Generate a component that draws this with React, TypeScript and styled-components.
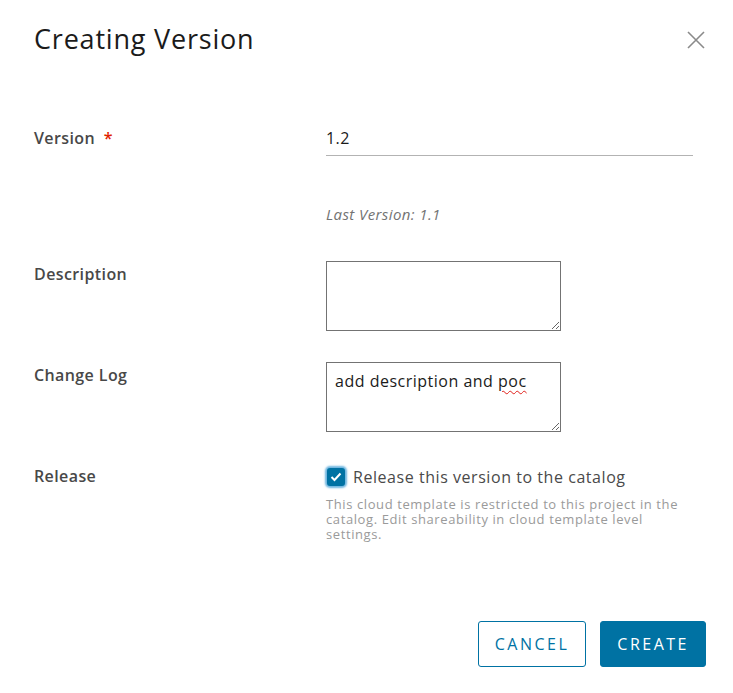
import styled, { createGlobalStyle } from 'styled-components'

const GlobalStyle = createGlobalStyle`
  body {
    margin: 0;
    background: #fff;
    font-family: "Open Sans", "Liberation Sans", sans-serif;
  }
`

export default function App() {
  return (
    <>
      <GlobalStyle />
      <Dialog>
        <Header>
          <Title>Creating Version</Title>
          <Close aria-label="Close">
            <svg width="20" height="20" viewBox="0 0 20 20">
              <path d="M2 2 L18 18 M18 2 L2 18" stroke="#8a8a8a" strokeWidth="1.6" fill="none" />
            </svg>
          </Close>
        </Header>
        <Form>
          <Label $offset={3}>Version <Required>*</Required></Label>
          <Field>
            <LineInput defaultValue="1.2" />
            <Hint>Last Version: 1.1</Hint>
          </Field>

          <Label>Description</Label>
          <Field>
            <TextArea />
          </Field>

          <Label>Change Log</Label>
          <Field>
            <TextBox role="textbox">
              add description and <Misspelled>poc</Misspelled>
            </TextBox>
          </Field>

          <Label>Release</Label>
          <Field>
            <CheckRow>
              <Check>
                <svg width="12" height="10" viewBox="0 0 12 10">
                  <path d="M1.5 5 L4.5 8 L10.5 1.5" stroke="#fff" strokeWidth="2" fill="none" />
                </svg>
              </Check>
              <CheckLabel>Release this version to the catalog</CheckLabel>
            </CheckRow>
            <Helper>
              This cloud template is restricted to this project in the catalog. Edit shareability in cloud template level settings.
            </Helper>
          </Field>
        </Form>
        <Footer>
          <Button>CANCEL</Button>
          <Button $primary>CREATE</Button>
        </Footer>
      </Dialog>
    </>
  )
}

const Dialog = styled.div`
  width: 733px;
  height: 693px;
  box-sizing: border-box;
  padding: 20px 27px 26px 34px;
  display: flex;
  flex-direction: column;
`

const Header = styled.div`
  display: flex;
  justify-content: space-between;
  align-items: center;
`

const Title = styled.h1`
  margin: 0;
  font-size: 27px;
  font-weight: 400;
  color: #1b1b1b;
  letter-spacing: 0.8px;
`

const Close = styled.button`
  border: none;
  background: none;
  padding: 0;
  width: 20px;
  height: 20px;
  margin-top: 2px;
  cursor: pointer;
`

const Form = styled.div`
  display: grid;
  grid-template-columns: 292px 367px;
  margin-top: 65px;
  row-gap: 31px;
`

const Label = styled.div<{ $offset?: number }>`
  font-size: 16px;
  font-weight: 600;
  letter-spacing: 0.4px;
  line-height: 22px;
  color: #484848;
  padding-top: ${p => 2 + (p.$offset ?? 0)}px;
`

const Required = styled.span`
  color: #e02200;
  margin-left: 4px;
`

const Field = styled.div`
  display: flex;
  flex-direction: column;
`

const LineInput = styled.input`
  border: none;
  border-bottom: 1px solid #b3b3b3;
  font-family: inherit;
  font-size: 16px;
  letter-spacing: 0.4px;
  color: #1b1b1b;
  padding: 5px 0 6px;
  outline: none;
`

const Hint = styled.div`
  margin-top: 48px;
  margin-bottom: 6px;
  font-size: 15px;
  font-style: italic;
  letter-spacing: 0.4px;
  color: #737373;
`

const TextArea = styled.textarea`
  width: 235px;
  height: 70px;
  box-sizing: border-box;
  border: 1px solid #737373;
  border-radius: 0;
  font-family: inherit;
  font-size: 16px;
  padding: 6px 8px;
  outline: none;
`

const TextBox = styled.div`
  width: 235px;
  height: 70px;
  box-sizing: border-box;
  border: 1px solid #737373;
  font-size: 16px;
  letter-spacing: 0.5px;
  line-height: 22px;
  color: #1b1b1b;
  padding: 7px 8px;
  overflow: auto;
  resize: both;
`

const Misspelled = styled.span`
  text-decoration: underline wavy #e0201b;
  text-decoration-thickness: 1px;
  text-underline-offset: 3px;
`

const CheckRow = styled.div`
  display: flex;
  align-items: center;
  gap: 8px;
  margin-top: 3px;
`

const Check = styled.span`
  width: 18px;
  height: 18px;
  margin-left: 1px;
  border-radius: 3px;
  background: #0072a3;
  box-shadow: 0 0 2px 2px #6fb6e0;
  display: flex;
  align-items: center;
  justify-content: center;
`

const CheckLabel = styled.span`
  font-size: 16px;
  letter-spacing: 0.55px;
  color: #4a4a4a;
`

const Helper = styled.div`
  margin-top: 9px;
  font-size: 13px;
  line-height: 15px;
  letter-spacing: 0.6px;
  color: #9a9a9a;
`

const Footer = styled.div`
  margin-top: auto;
  display: flex;
  justify-content: flex-end;
  gap: 14px;
`

const Button = styled.button<{ $primary?: boolean }>`
  height: 46px;
  padding: 0 16px;
  border-radius: 3px;
  border: 1px solid #0072a3;
  background: ${p => (p.$primary ? '#0072a3' : '#fff')};
  color: ${p => (p.$primary ? '#fff' : '#0072a3')};
  font-family: inherit;
  font-size: 16px;
  font-weight: 500;
  letter-spacing: 2.5px;
  cursor: pointer;
`
